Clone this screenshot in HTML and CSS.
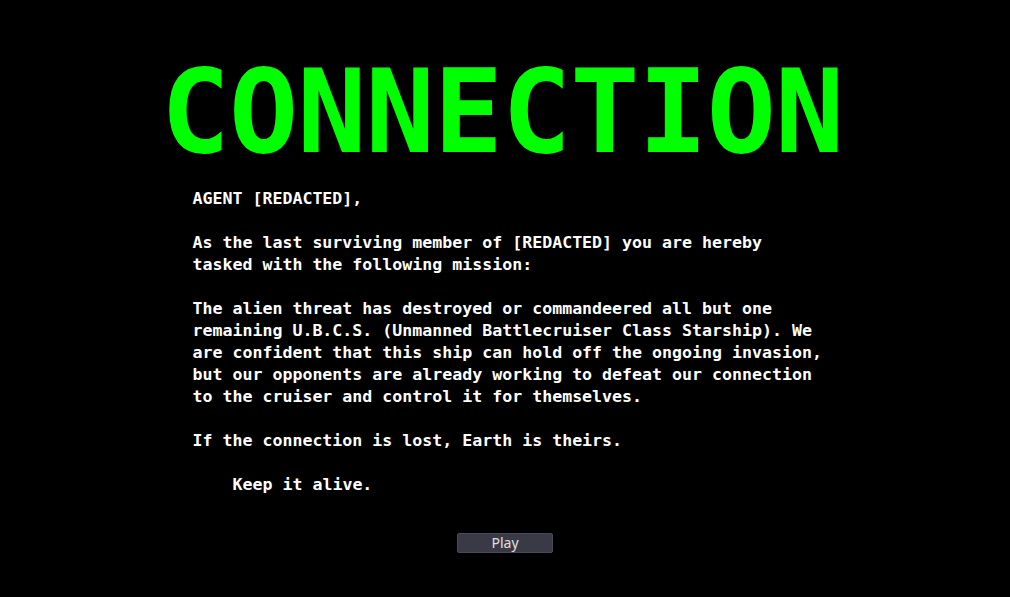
FILE: index.html
```html
<!DOCTYPE html>
<html lang="en">

<head>
<meta charset="UTF-8">
<meta name="viewport" content="width=device-width, initial-scale=1.0">
<link rel="stylesheet" href="styles.css">
</head>

<body>
<div class="screen">
	<h1 class="title">CONNECTION</h1>

	<div class="briefing">
		<p>AGENT [REDACTED],</p>
		<p>As the last surviving member of [REDACTED] you are hereby tasked with the following mission:</p>
		<p>The alien threat has destroyed or commandeered all but one remaining U.B.C.S. (Unmanned Battlecruiser Class Starship). We are confident that this ship can hold off the ongoing invasion, but our opponents are already working to defeat our connection to the cruiser and control it for themselves.</p>
		<p>If the connection is lost, Earth is theirs.</p>
		<p class="sign-off">Keep it alive.</p>
	</div>

	<button class="play-btn" id="play">Play</button>
</div>
</body>

</html>
```

FILE: styles.css
```css
html, body {
	margin: 0;
	padding: 0;
	background-color: #000;
}

.screen {
	display: flex;
	flex-direction: column;
	align-items: center;
	width: 1010px;
	height: 597px;
	padding-top: 55px;
	box-sizing: border-box;
}

.title {
	margin: 0 0 0 -6px;
	font-family: "DejaVu Sans Mono", monospace;
	font-weight: bold;
	font-size: 115px;
	line-height: 115px;
	letter-spacing: -1px;
	color: #00ff00;
}

.briefing {
	width: 635px;
	margin-top: 18px;
	margin-left: 10px;
	font-family: "DejaVu Sans Mono", monospace;
	font-weight: bold;
	font-size: 16.6px;
	line-height: 22px;
	color: #fff;
}

.briefing p {
	margin: 0 0 22px 0;
}

.briefing .sign-off {
	padding-left: 40px;
	margin-bottom: 0;
}

.play-btn {
	margin-top: 37px;
	width: 96px;
	height: 20px;
	padding: 0 0 2px 0;
	background-color: #3a3946;
	border: 1px solid #4a4957;
	border-radius: 2px;
	font-family: "Noto Sans", sans-serif;
	font-size: 14px;
	line-height: 15px;
	color: #e0e0e0;
	cursor: pointer;
}

.play-btn:hover {
	background-color: #44434f;
}
```
